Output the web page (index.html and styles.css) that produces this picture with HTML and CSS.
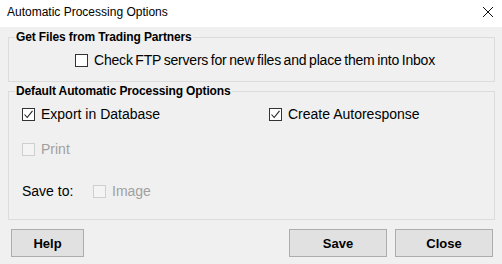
FILE: index.html
```html
<!DOCTYPE html>
<html lang="en">
<head>
    <meta charset="UTF-8">
    <meta name="viewport" content="width=device-width, initial-scale=1.0">
    <title>Automatic Processing Options</title>
    <link rel="stylesheet" href="styles.css">
</head>
<body>
    <div class="dialog">
        <div class="titlebar">
            <span class="title">Automatic Processing Options</span>
            <svg class="close-x" width="12" height="12" viewBox="0 0 12 12">
                <path d="M1 1 L11 11 M11 1 L1 11" stroke="#111" stroke-width="1" fill="none"/>
            </svg>
        </div>

        <div class="group group-ftp">
            <div class="group-title">Get Files from Trading Partners</div>
            <div class="row">
                <label class="check">
                    <span class="box"></span>
                    <span class="ftp-text">Check FTP servers for new files and place them into Inbox</span>
                </label>
            </div>
        </div>

        <div class="group group-default">
            <div class="group-title">Default Automatic Processing Options</div>
            <div class="row cols">
                <label class="check">
                    <span class="box checked">
                        <svg width="11" height="11" viewBox="0 0 11 11"><path d="M1.5 5.5 L4.2 8.5 L9.5 1.8" stroke="#222" stroke-width="1.1" fill="none"/></svg>
                    </span>
                    <span>Export in Database</span>
                </label>
                <label class="check">
                    <span class="box checked">
                        <svg width="11" height="11" viewBox="0 0 11 11"><path d="M1.5 5.5 L4.2 8.5 L9.5 1.8" stroke="#222" stroke-width="1.1" fill="none"/></svg>
                    </span>
                    <span>Create Autoresponse</span>
                </label>
            </div>
            <div class="row row-print">
                <label class="check disabled">
                    <span class="box"></span>
                    <span>Print</span>
                </label>
            </div>
            <div class="row row-save">
                <span class="save-label">Save to:</span>
                <label class="check disabled">
                    <span class="box"></span>
                    <span>Image</span>
                </label>
            </div>
        </div>

        <div class="buttons">
            <button class="btn btn-help">Help</button>
            <div class="spacer"></div>
            <button class="btn">Save</button>
            <button class="btn">Close</button>
        </div>
    </div>
</body>
</html>
```

FILE: styles.css
```css
body {
    margin: 0;
    background: #f0f0f0;
    font-family: "Liberation Sans", Arial, sans-serif;
    color: #000;
}

.dialog {
    width: 502px;
    height: 264px;
    overflow: hidden;
}

.titlebar {
    height: 27px;
    background: #fff;
    display: flex;
    align-items: center;
    padding: 0 7px;
    font-size: 12px;

    .title {
        flex: 1;
        margin-top: -3px;
    }

    .close-x {
        margin-right: 1px;
        margin-top: -3px;
    }
}

.group {
    margin: 0 7px 0 8px;
    border: 1px solid #dcdcdc;

    .group-title {
        width: fit-content;
        margin: -8px 0 0 6px;
        padding: 0 1px;
        line-height: 14px;
        font-size: 12px;
        font-weight: bold;
        letter-spacing: -0.12px;
        background: #f0f0f0;
    }
}

.group-ftp {
    margin-top: 10px;
    padding: 0 0 11px 66px;

    .group-title {
        margin-left: -60px;
    }

    .row {
        margin-top: 6px;
    }

    .ftp-text {
        letter-spacing: -0.2px;
        word-spacing: -1px;
    }
}

.group-default {
    margin-top: 9px;
    padding: 0 0 18px 13px;

    .group-title {
        margin-left: -7px;
    }

    .row {
        margin-top: 6px;
    }

    .row-print {
        margin-top: 15px;
    }

    .row-save {
        margin-top: 22px;
    }
}

.row {
    height: 20px;
    display: flex;
    align-items: center;
    font-size: 14px;

    &.cols {
        display: grid;
        grid-template-columns: 247px 1fr;
        align-items: center;
    }
}

.check {
    display: flex;
    align-items: center;
    gap: 6px;

    .box {
        width: 11px;
        height: 11px;
        border: 1px solid #333;
        background: #fff;
        display: flex;
        align-items: center;
        justify-content: center;
    }

    &.disabled {
        color: #a0a0a0;

        .box {
            border-color: #cfcfcf;
            background: #f4f4f4;
        }
    }
}

.save-label {
    width: 71px;
}

.buttons {
    display: flex;
    gap: 8px;
    margin: 9px 9px 0 11px;

    .spacer {
        flex: 1;
    }

    .btn {
        width: 98px;
        height: 28px;
        margin: 0;
        padding: 0;
        border: 1px solid #adadad;
        background: #e1e1e1;
        font-family: "Liberation Sans", Arial, sans-serif;
        font-size: 13px;
        font-weight: bold;
        color: #000;
    }

    .btn-help {
        width: 73px;
    }
}
```
